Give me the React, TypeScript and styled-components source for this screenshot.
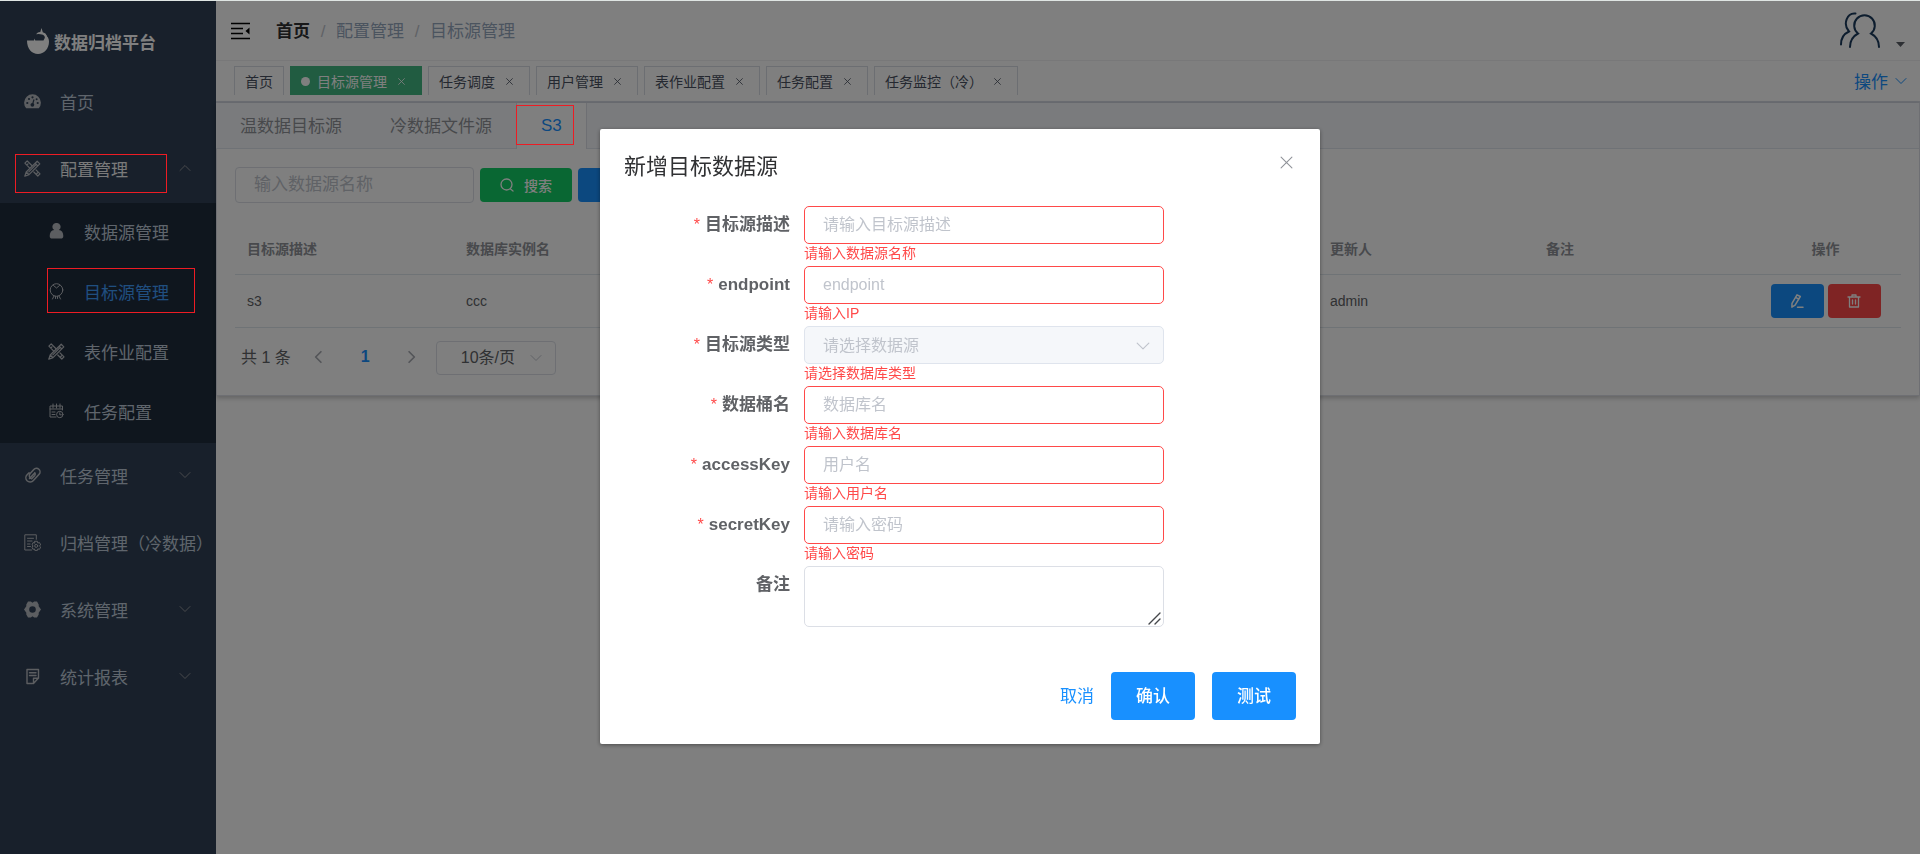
import React from 'react';
import styled, { createGlobalStyle, css } from 'styled-components';

const GlobalStyle = createGlobalStyle`
  * { box-sizing: border-box; }
  html, body, #root { height: 100%; }
  body {
    margin: 0;
    background: #fff;
    color: #606266;
    font-family: "Liberation Sans", "Noto Sans CJK SC", sans-serif;
    font-size: 14px;
  }
  button, input, select, textarea { font-family: inherit; }
  a { color: inherit; text-decoration: none; }
  svg { display: block; flex: none; }
`;

const BLUE = '#1890ff';
const RED = '#ff4949';

const Page = styled.div`
  display: flex;
  min-height: 100%;
  border-top: 1px solid #dfe5e3;
`;

/* ---------- sidebar ---------- */
const Sidebar = styled.aside`
  flex: none;
  width: 216px;
  background: #304156;
`;

const Brand = styled.h1`
  display: flex;
  align-items: center;
  gap: 4px;
  height: 68px;
  margin: 0;
  padding: 12px 0 0 26px;
  color: #fff;
  font-size: 17px;
  font-weight: 700;
`;

const MenuLink = styled.a<{ $sub?: boolean; $tone?: string }>`
  position: relative;
  display: flex;
  align-items: center;
  gap: ${p => (p.$sub ? 19 : 19)}px;
  height: ${p => (p.$sub ? 60 : 67)}px;
  padding: 0 25px 3px ${p => (p.$sub ? 48 : 24)}px;
  color: ${p => p.$tone || '#bfcbd9'};
  font-size: 17px;
  white-space: nowrap;
  > svg { color: #b9bcc2; }
  > svg:last-of-type:not(:first-of-type) { margin-left: auto; color: #909399; }
`;

const SubMenu = styled.div`
  background: #1f2d3d;
`;

const Marker = styled.span<{ $inset: string }>`
  position: absolute;
  z-index: 30;
  inset: ${p => p.$inset};
  border: 1px solid #ed1c24;
  pointer-events: none;
`;

/* ---------- top bars ---------- */
const Main = styled.main`
  flex: 1;
  min-width: 0;
`;

const TopBar = styled.header`
  display: flex;
  align-items: center;
  height: 60px;
  padding: 0 15px;
  border-bottom: 1px solid #f0f1f2;
`;

const IconButton = styled.button`
  display: flex;
  align-items: center;
  padding: 0;
  border: 0;
  background: none;
  color: #000;
`;

const Crumbs = styled.nav`
  display: flex;
  align-items: baseline;
  gap: 10px;
  margin-left: 25px;
  padding-bottom: 3px;
  color: #97a8be;
  font-size: 17px;
  strong { color: #303133; }
  i { color: #c0c4cc; font-style: normal; width: 6px; text-align: center; }
`;

const Account = styled.button`
  display: flex;
  align-items: flex-end;
  gap: 16px;
  margin-left: auto;
  padding: 0;
  border: 0;
  background: none;
  color: #5a5e66;
`;

const TabsBar = styled.nav`
  display: flex;
  align-items: flex-start;
  gap: 6px;
  height: 42px;
  padding: 5px 13px 0 18px;
  border-bottom: 2px solid #d8dce5;
`;

const PageTab = styled.a<{ $active?: boolean }>`
  display: flex;
  align-items: center;
  height: 29px;
  padding: 0 10px;
  border: 1px solid #d8dce5;
  border-bottom: 0;
  color: #495060;
  font-size: 14px;
  white-space: nowrap;
  ${p => p.$active && css`
    border-color: #42b983;
    background: #42b983;
    color: #fff;
  `}
  > svg { margin: 0 6px 0 11px; }
`;

const Dot = styled.span`
  width: 9px;
  height: 9px;
  margin-right: 7px;
  border-radius: 50%;
  background: #fff;
`;

const Actions = styled.button`
  display: flex;
  align-items: center;
  gap: 7px;
  height: 29px;
  margin-left: auto;
  padding: 0;
  border: 0;
  background: none;
  color: ${BLUE};
  font-size: 17px;
`;

/* ---------- content card ---------- */
const Card = styled.section`
  border: 1px solid #dcdfe6;
  border-top: 0;
  box-shadow: 0 2px 5px rgba(0, 0, 0, 0.24);
  padding-bottom: 20px;
`;

const CardTabs = styled.div`
  display: flex;
  height: 46px;
  margin-left: -1px;
  background: #f5f7fa;
  border-bottom: 1px solid #dfe4ed;
`;

const CardTab = styled.button<{ $active?: boolean }>`
  position: relative;
  height: 46px;
  padding: 0 24px 3px;
  border: 0;
  background: none;
  color: #909399;
  font-size: 17px;
  ${p => p.$active && css`
    padding-bottom: 0;
    border: solid #dcdfe6;
    border-width: 0 1px;
    background: #fff;
    color: ${BLUE};
  `}
`;

const CardBody = styled.div`
  padding: 18px 18px 0;
`;

const Toolbar = styled.div`
  display: flex;
  align-items: center;
  gap: 6px;
`;

const SearchInput = styled.input`
  width: 239px;
  height: 36px;
  padding: 0 18px;
  border: 1px solid #dcdfe6;
  border-radius: 4px;
  background: #fff;
  font-size: 17px;
  &::placeholder { color: #c0c4cc; }
`;

const FillButton = styled.button<{ $color: string; $w: number }>`
  display: inline-flex;
  align-items: center;
  justify-content: center;
  gap: 10px;
  width: ${p => p.$w}px;
  height: 34px;
  padding: 0;
  border: 0;
  border-radius: 4px;
  background: ${p => p.$color};
  color: #fff;
  font-size: 14px;
  font-weight: 500;
`;

const Table = styled.table`
  width: 100%;
  margin-top: 20px;
  border-collapse: collapse;
  table-layout: fixed;
  font-size: 14px;
  th, td {
    height: 53px;
    padding: 0 12px;
    border-bottom: 1px solid #dfe6ec;
    text-align: left;
  }
  th { height: 51px; color: #909399; font-weight: 700; }
  th:first-child { width: 219px; }
  th:last-child { width: 151px; }
  th:last-child, td:last-child { text-align: center; }
`;

const RowActions = styled.div`
  display: flex;
  justify-content: center;
  gap: 4px;
`;

const Pagination = styled.div`
  display: flex;
  align-items: center;
  margin-top: 13px;
  padding-left: 6px;
  color: #606266;
  font-size: 16px;
`;

const Total = styled.span`
  padding-bottom: 4px;
  margin-right: 4px;
`;

const PageButton = styled.button<{ $current?: boolean }>`
  display: flex;
  align-items: center;
  justify-content: center;
  width: 47px;
  height: 34px;
  padding: 0 0 2px;
  border: 0;
  background: none;
  color: ${p => (p.$current ? BLUE : '#a8abb2')};
  font-size: 16px;
  font-weight: 700;
`;

const SelectWrap = styled.div<{ $w: string }>`
  position: relative;
  width: ${p => p.$w};
  > svg {
    position: absolute;
    right: 14px;
    top: 50%;
    margin-top: -6px;
    color: #c0c4cc;
    pointer-events: none;
  }
`;

const SizeSelect = styled.select`
  appearance: none;
  display: block;
  width: 100%;
  height: 34px;
  padding: 0 24px;
  border: 1px solid #dcdfe6;
  border-radius: 4px;
  background: #fff;
  color: #606266;
  font-size: 16px;
`;

/* ---------- dialog ---------- */
const Overlay = styled.div`
  position: fixed;
  inset: 1px 0 0;
  z-index: 20;
  display: flex;
  align-items: flex-start;
  justify-content: center;
  padding-top: 128px;
  background: rgba(0, 0, 0, 0.5);
`;

const Dialog = styled.div`
  width: 720px;
  padding: 24px;
  border-radius: 2px;
  background: #fff;
  box-shadow: 0 1px 4px rgba(0, 0, 0, 0.4);
`;

const DialogHead = styled.div`
  display: flex;
  justify-content: space-between;
  height: 53px;
  padding-right: 3px;
  button { height: 19px; color: #909399; }
`;

const DialogTitle = styled.h2`
  margin: 0;
  color: #303133;
  font-size: 22px;
  font-weight: 400;
  line-height: 28px;
`;

const Field = styled.div`
  display: grid;
  grid-template-columns: 166px 360px;
  column-gap: 14px;
  min-height: 60px;
`;

const Label = styled.label<{ $required?: boolean }>`
  color: #606266;
  font-size: 17px;
  font-weight: 700;
  line-height: 38px;
  text-align: right;
  ${p => p.$required && css`
    &::before {
      content: "*";
      margin-right: 5px;
      color: ${RED};
      font-size: 16px;
      font-weight: 400;
    }
  `}
`;

const controlStyle = css`
  display: block;
  width: 100%;
  height: 38px;
  padding: 0 18px;
  border: 1px solid ${RED};
  border-radius: 5px;
  background: #fff;
  color: #606266;
  font-size: 16px;
`;

const TextInput = styled.input`
  ${controlStyle}
  &::placeholder { color: #c0c4cc; opacity: 1; }
`;

const TypeSelect = styled.select`
  ${controlStyle}
  appearance: none;
  border-color: #dfe4ed;
  background: #f5f7fa;
  color: #c0c4cc;
  opacity: 1;
`;

const NotesBox = styled.div`
  position: relative;
  > svg {
    position: absolute;
    right: 3px;
    bottom: 2px;
    color: #45474b;
    pointer-events: none;
  }
`;

const Notes = styled.textarea`
  ${controlStyle}
  height: 61px;
  padding: 6px 18px;
  border-color: #dcdfe6;
  resize: vertical;
  &::-webkit-resizer { background: transparent; }
`;

const ErrorText = styled.div`
  color: ${RED};
  font-size: 14px;
  line-height: 18px;
`;

const DialogFoot = styled.div`
  display: flex;
  justify-content: flex-end;
  gap: 17px;
  padding-top: 45px;
`;

const DialogButton = styled.button<{ $text?: boolean }>`
  width: ${p => (p.$text ? 'auto' : '84px')};
  height: 48px;
  padding: 0 0 4px;
  border: 0;
  border-radius: 4px;
  background: ${p => (p.$text ? 'none' : BLUE)};
  color: ${p => (p.$text ? BLUE : '#fff')};
  font-size: 17px;
  font-weight: ${p => (p.$text ? 400 : 500)};
`;

/* ---------- icons ---------- */
type GlyphProps = { children: React.ReactNode; size?: number; box?: number; w?: number };

const Glyph = ({ children, size = 17, box = 17, w = 1 }: GlyphProps) => (
  <svg width={size} height={size} viewBox={`0 0 ${box} ${box}`} fill="none" stroke="currentColor"
    strokeWidth={w} strokeLinecap="round" strokeLinejoin="round" aria-hidden="true">{children}</svg>
);

const Chevron = ({ d = 'down', size = 12, w = 1 }: { d?: 'up' | 'down' | 'left' | 'right'; size?: number; w?: number }) => {
  const paths = { up: 'M1 8.5l5-5 5 5', down: 'M1 3.5l5 5 5-5', left: 'M8.5 1.5L4 6l4.5 4.5', right: 'M3.5 1.5L8 6l-4.5 4.5' };
  return <Glyph size={size} box={12} w={w}><path d={paths[d]} /></Glyph>;
};

const CloseIcon = ({ size, w = 1 }: { size: number; w?: number }) => (
  <Glyph size={size} box={12} w={w}><path d="M1 1l10 10M11 1L1 11" /></Glyph>
);

const LogoIcon = () => (
  <svg width="24" height="26" viewBox="0 0 24 26" aria-hidden="true">
    <path fill="#fff" d="M1 12.500h7l.5-2 .8 2h8.200q1.800-2.800 1.500-6Q23 9 23 13.500C23 21 18 26 12 26S1 21 1 12.500z" />
    <path fill="#fff" d="M10 6.300q2-2.500 4.300-2.300L15.500 0l1.300 4.300Q20 5 21 8l-1.500 3Q19 7 16 6.500q-3-1-6-.2z" />
  </svg>
);

const DashboardIcon = () => (
  <svg width="17" height="17" viewBox="0 0 17 17" aria-hidden="true">
    <path fill="currentColor" d="M2.200 15.300A8.400 8.400 0 1 1 14.800 15.300z" />
    <g fill="#304156"><circle cx="3.300" cy="10" r="1.100" /><circle cx="5" cy="6" r="1.100" /><circle cx="8.500" cy="4.300" r="1.100" /><circle cx="13.700" cy="10" r="1.100" /><circle cx="12.600" cy="6.200" r="1" /><circle cx="8.400" cy="11.800" r="1.900" /></g>
    <path stroke="#304156" strokeWidth="1.200" d="M8.500 11.500L10 6.500" />
  </svg>
);

const ToolsIcon = () => (
  <Glyph w={1.2}>
    <path d="M5.500 7.800L.9 3.200 3.200.9l4.600 4.600M9.800 12l4 4 2.200-2.200-4-4M2.800 5l1.200-1.200M12.200 14.200l1.200-1.200" />
    <path d="M13.200 1.200l2.600 2.600L5 14.600.8 16.200 2.200 12zM11.200 3.200l2.600 2.600M2.300 12l2.700 2.600M4.800 11.800l6.800-6.800" />
  </Glyph>
);

const UserIcon = () => (
  <svg width="17" height="17" viewBox="0 0 17 17" aria-hidden="true">
    <path fill="currentColor" d="M8.500 0a3.800 3.800 0 0 1 2.300 7c3 .3 4.500 2.500 4.500 6 0 2-1 2.500-2.500 2.500H4.200c-1.500 0-2.500-.5-2.500-2.500 0-3.500 1.500-5.700 4.500-6a3.800 3.800 0 0 1 2.300-7z" />
  </svg>
);

const TargetIcon = () => (
  <Glyph><circle cx="8.500" cy="7" r="6.300" /><path d="M5.500 2.500l3 2.500 3-2.500M6 13l-1.500 3M11 13l1.500 3M7.500 13.500v2M9.500 13.500v2" /></Glyph>
);

const ScheduleIcon = () => (
  <Glyph><path d="M8 14H2V3h12.500v4M2 6h12.500M5 1v4M8.500 1v4M12 1v4M4 9h3M4 11.500h3" /><circle cx="11.800" cy="11.500" r="3.200" /><path d="M11.800 9.800v2h1.500" /></Glyph>
);

const LinkIcon = () => (
  <Glyph w={1.5}>
    <path d="M6.500 11.300a3.400 3.400 0 0 1-.3-4.900l3.600-3.900a3.500 3.500 0 0 1 5.300 4.800l-5.700 6.200a4.300 4.300 0 0 1-6.300.3 4.300 4.300 0 0 1 0-6l2-2.100" />
    <path d="M5.500 11.500l4.700-5M10.800 5.700q1 1.300 0 2.700L7.600 11.800" />
  </Glyph>
);

const ArchiveIcon = () => (
  <Glyph><path d="M7.500 16H.8V.8h11.500v4.500M3.500 4.300h6M3.500 7h4.500M3.500 10h2.500M3.500 12.500h3" />
    <path d="M10.800 7.300h2.600l.4 1.700 1.700-.4 1.200 2.300-1.300 1 1.300 1.200-1.200 2.200-1.700-.4-.4 1.500h-2.600l-.4-1.500-1.500.4L8 13.100l1.200-1.200-1.200-1 1-2.300 1.500.4z" />
    <circle cx="12.200" cy="11.900" r="1.500" /></Glyph>
);

const GearIcon = () => (
  <svg width="17" height="17" viewBox="0 0 17 17" aria-hidden="true">
    <path fill="currentColor" fillRule="evenodd" d="M4 .6h2.800l1.700 1.200L10.200.6H13l1.700 2.900v1.700L17 8.500l-2.300 3.300v1.700L13 16.400h-2.800l-1.700-1.200-1.700 1.200H4l-1.700-2.900v-1.700L0 8.500l2.300-3.300V3.500zM8.500 5.200a3.300 3.300 0 1 0 0 6.600 3.300 3.300 0 0 0 0-6.600z" />
  </svg>
);

const ReportIcon = () => (
  <Glyph w={1.4}><path d="M8.500 15.500H3V1.500h11.500v8.500l-5 5.500v-5.200h5M5.500 4.800h6.500M5.500 7.500h6.500" /></Glyph>
);

const FoldIcon = () => (
  <svg width="20" height="18" viewBox="0 0 20 18" aria-hidden="true">
    <path stroke="currentColor" strokeWidth="1.600" d="M0 1.500h19M0 6.500h12M0 11.500h12M0 16.500h19" />
    <path fill="currentColor" d="M14.500 9l4-3.500v7z" />
  </svg>
);

const PeopleIcon = () => (
  <svg width="40" height="37" viewBox="0 0 40 37" fill="none" stroke="#1b3a5c" strokeWidth="2" strokeLinecap="round" aria-hidden="true">
    <path d="M10 35c0-7 2.500-10.500 8-13.500A10.300 10.300 0 1 1 31 21.500C36.500 24.500 39 28 39 35" />
    <path d="M15.500 1.500C7 .5 2.500 12 9 19.500 3.500 22 1 26.500 1 32.500" />
  </svg>
);

const SearchIcon = () => <Glyph size={14} box={14} w={1.3}><circle cx="6.500" cy="6.500" r="5.500" /><path d="M10.500 11l2.500 2" /></Glyph>;
const PlusIcon = () => <Glyph size={14} box={14} w={1.3}><path d="M1 7h12M7 1v12" /></Glyph>;
const EditIcon = () => <Glyph size={14} box={14} w={1.5}><path d="M7 .8l3.300 1.700-5.200 8.700-3.200 1.900.1-3.700zM5.500 3.300l3.300 1.900M7.500 13.200h5.500" /></Glyph>;
const TrashIcon = () => <Glyph size={14} box={14} w={1.3}><path d="M1 3h12M5 3V1h4v2M2.500 3v10h9V3M5.500 6v4M8.500 6v4" /></Glyph>;
const GripIcon = () => <Glyph size={13} box={13} w={1.4}><path d="M1 12L12 1M7 12l5-5" /></Glyph>;

/* ---------- data ---------- */
type Entry = { icon: React.ReactNode; text: string; arrow?: boolean };

const subEntries: Entry[] = [
  { icon: <UserIcon />, text: '数据源管理' },
  { icon: <TargetIcon />, text: '目标源管理' },
  { icon: <ToolsIcon />, text: '表作业配置' },
  { icon: <ScheduleIcon />, text: '任务配置' },
];

const lowerEntries: Entry[] = [
  { icon: <LinkIcon />, text: '任务管理', arrow: true },
  { icon: <ArchiveIcon />, text: '归档管理（冷数据）' },
  { icon: <GearIcon />, text: '系统管理', arrow: true },
  { icon: <ReportIcon />, text: '统计报表', arrow: true },
];

const pageTabs = ['首页', '目标源管理', '任务调度', '用户管理', '表作业配置', '任务配置', '任务监控（冷）'];

const fields = [
  { id: 'desc', label: '目标源描述', hint: '请输入目标源描述', error: '请输入数据源名称' },
  { id: 'endpoint', label: 'endpoint', hint: 'endpoint', error: '请输入IP' },
  { id: 'type', label: '目标源类型', hint: '请选择数据源', error: '请选择数据库类型', select: true },
  { id: 'bucket', label: '数据桶名', hint: '数据库名', error: '请输入数据库名' },
  { id: 'access', label: 'accessKey', hint: '用户名', error: '请输入用户名' },
  { id: 'secret', label: 'secretKey', hint: '请输入密码', error: '请输入密码' },
];

export default function App() {
  return (
    <>
      <GlobalStyle />
      <Page>
        <Sidebar>
          <Brand><LogoIcon />数据归档平台</Brand>
          <nav>
            <MenuLink href="#"><DashboardIcon />首页</MenuLink>
            <MenuLink href="#" $tone="#f4f4f5">
              <ToolsIcon />配置管理<Chevron d="up" />
              <Marker $inset="18px 49px 10px 15px" />
            </MenuLink>
            <SubMenu>
              {subEntries.map((e, i) => (
                <MenuLink key={e.text} href="#" $sub $tone={i === 1 ? '#409eff' : undefined}>
                  {e.icon}{e.text}
                  {i === 1 && <Marker $inset="5px 21px 10px 47px" />}
                </MenuLink>
              ))}
            </SubMenu>
            {lowerEntries.map(e => (
              <MenuLink key={e.text} href="#">{e.icon}{e.text}{e.arrow && <Chevron />}</MenuLink>
            ))}
          </nav>
        </Sidebar>

        <Main>
          <TopBar>
            <IconButton aria-label="折叠菜单"><FoldIcon /></IconButton>
            <Crumbs>
              <strong>首页</strong><i>/</i><a href="#">配置管理</a><i>/</i><span>目标源管理</span>
            </Crumbs>
            <Account aria-label="用户">
              <PeopleIcon />
              <svg width="9" height="7" viewBox="0 0 9 7" aria-hidden="true"><path fill="currentColor" d="M0 0h9L4.500 5z" /></svg>
            </Account>
          </TopBar>
          <TabsBar>
            {pageTabs.map((t, i) => (
              <PageTab key={t} href="#" $active={i === 1}>
                {i === 1 && <Dot />}{t}{i > 0 && <CloseIcon size={7} w={1.4} />}
              </PageTab>
            ))}
            <Actions>操作<Chevron /></Actions>
          </TabsBar>

          <Card>
            <CardTabs>
              <CardTab>温数据目标源</CardTab>
              <CardTab>冷数据文件源</CardTab>
              <CardTab $active>S3<Marker $inset="2px 12px 4px -1px" /></CardTab>
            </CardTabs>
            <CardBody>
              <Toolbar>
                <SearchInput aria-label="数据源名称" placeholder="输入数据源名称" />
                <FillButton $color="#13ce66" $w={92}><SearchIcon />搜索</FillButton>
                <FillButton $color={BLUE} $w={92} aria-label="新增"><PlusIcon /></FillButton>
              </Toolbar>
              <Table>
                <thead>
                  <tr>
                    <th>目标源描述</th><th>数据库实例名</th><th /><th /><th /><th>更新人</th><th>备注</th><th>操作</th>
                  </tr>
                </thead>
                <tbody>
                  <tr>
                    <td>s3</td><td>ccc</td><td /><td /><td /><td>admin</td><td />
                    <td>
                      <RowActions>
                        <FillButton $color={BLUE} $w={53} aria-label="编辑"><EditIcon /></FillButton>
                        <FillButton $color={RED} $w={53} aria-label="删除"><TrashIcon /></FillButton>
                      </RowActions>
                    </td>
                  </tr>
                </tbody>
              </Table>
              <Pagination>
                <Total>共 1 条</Total>
                <PageButton aria-label="上一页"><Chevron d="left" size={14} w={1.5} /></PageButton>
                <PageButton $current>1</PageButton>
                <PageButton aria-label="下一页"><Chevron d="right" size={14} w={1.5} /></PageButton>
                <SelectWrap $w="120px">
                  <SizeSelect aria-label="每页条数"><option>10条/页</option></SizeSelect>
                  <Chevron />
                </SelectWrap>
              </Pagination>
            </CardBody>
          </Card>
        </Main>
      </Page>

      <Overlay>
        <Dialog role="dialog" aria-labelledby="dialog-title">
          <DialogHead>
            <DialogTitle id="dialog-title">新增目标数据源</DialogTitle>
            <IconButton aria-label="关闭"><CloseIcon size={13} /></IconButton>
          </DialogHead>
          <form>
            {fields.map(f => (
              <Field key={f.id}>
                <Label htmlFor={f.id} $required>{f.label}</Label>
                <div>
                  {f.select ? (
                    <SelectWrap $w="100%">
                      <TypeSelect id={f.id} disabled><option>{f.hint}</option></TypeSelect>
                      <Chevron size={14} />
                    </SelectWrap>
                  ) : (
                    <TextInput id={f.id} placeholder={f.hint} />
                  )}
                  <ErrorText>{f.error}</ErrorText>
                </div>
              </Field>
            ))}
            <Field>
              <Label htmlFor="notes">备注</Label>
              <NotesBox>
                <Notes id="notes" />
                <GripIcon />
              </NotesBox>
            </Field>
          </form>
          <DialogFoot>
            <DialogButton $text>取消</DialogButton>
            <DialogButton>确认</DialogButton>
            <DialogButton>测试</DialogButton>
          </DialogFoot>
        </Dialog>
      </Overlay>
    </>
  );
}
